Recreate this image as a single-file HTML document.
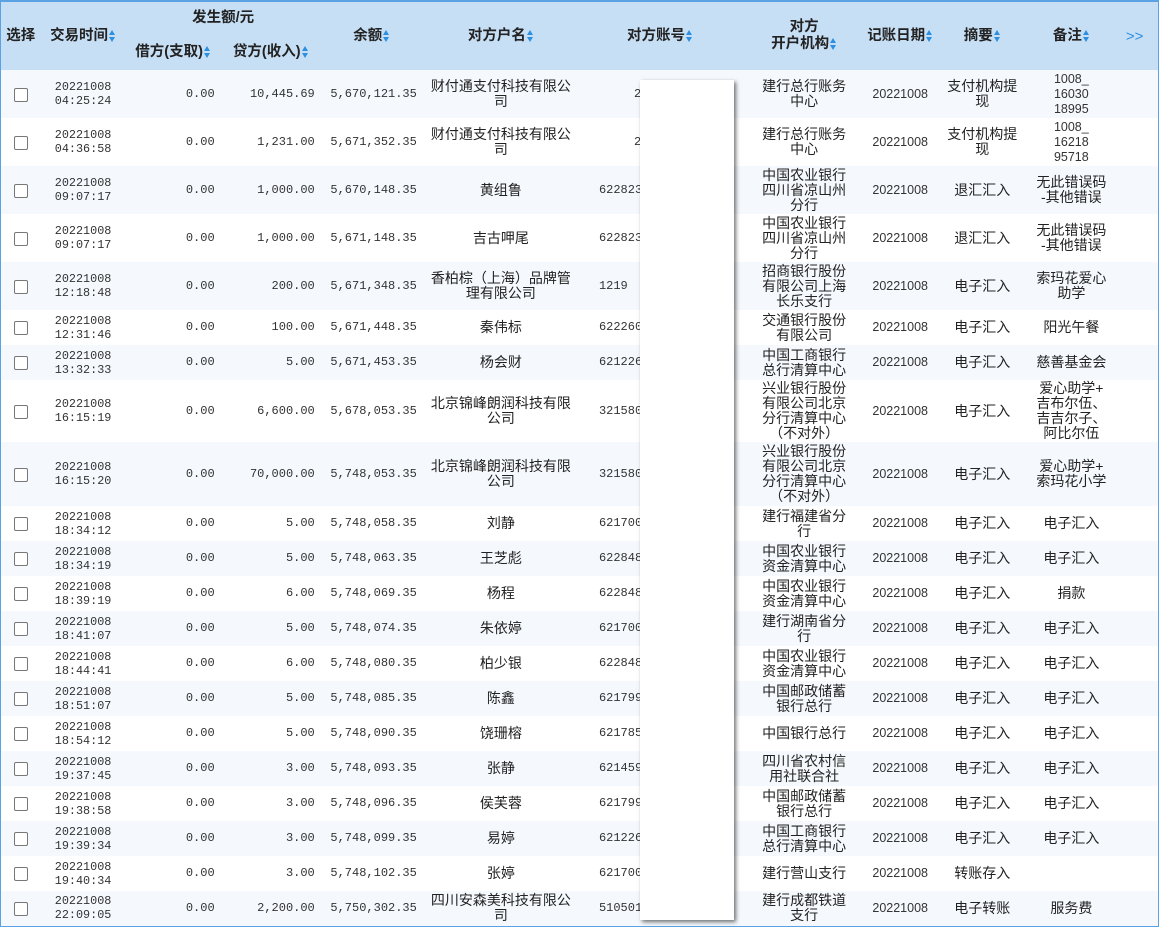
<!DOCTYPE html>
<html><head><meta charset="utf-8"><style>
body{margin:0;background:#fff;width:1168px;height:930px;overflow:hidden;position:relative;font-family:"Liberation Sans","Noto Sans CJK SC",sans-serif;color:#222}
table{position:absolute;left:0;top:0;border-collapse:collapse;table-layout:fixed;width:1159px;border:1px solid #5aa2e3;border-top:2px solid #5aa2e3}
th{background:#c7dff5;font-weight:bold;font-size:14.5px;color:#222;padding:0;text-align:center;line-height:17px;white-space:nowrap;overflow:visible}
td{padding:0;font-size:14px;line-height:15px;text-align:center;overflow:hidden;white-space:nowrap}
td.w{white-space:normal;padding:0 5px}
tbody tr:nth-child(odd){background:#f5f9fd}
.n{font-family:"Liberation Mono",monospace;font-size:12px;text-align:right;padding-right:6px;color:#333}
.t{font-family:"Liberation Mono",monospace;font-size:11.8px;line-height:14px;color:#333}
.d{font-size:12.5px;color:#333}
.a{font-family:"Liberation Mono",monospace;font-size:12px;text-align:left;padding-left:20px;color:#333}
.cb{display:inline-block;width:12px;height:12px;border:1px solid #777;border-radius:2px;background:#fff;vertical-align:middle}
.s{display:inline-block;width:7px;height:14px;vertical-align:middle;position:relative;margin-left:1px}
.s:before{content:"";position:absolute;left:0;top:1px;border-left:3.5px solid transparent;border-right:3.5px solid transparent;border-bottom:5px solid #2d8fe0}
.s:after{content:"";position:absolute;left:0;top:8px;border-left:3.5px solid transparent;border-right:3.5px solid transparent;border-top:5px solid #2d8fe0}
.box{position:absolute;left:640px;top:80px;width:94px;height:840px;background:#fff;box-shadow:2px 2px 4px rgba(0,0,0,.55)}
</style></head><body>
<table>
<colgroup><col style="width:40px"><col style="width:85px"><col style="width:95px"><col style="width:100px"><col style="width:102px"><col style="width:156px"><col style="width:162px"><col style="width:126px"><col style="width:66px"><col style="width:98px"><col style="width:80px"><col style="width:47px"></colgroup>
<thead>
<tr style="height:34px"><th rowspan="2">选择</th><th rowspan="2">交易时间<span class="s"></span></th><th colspan="2">发生额/元</th><th rowspan="2">余额<span class="s"></span></th><th rowspan="2">对方户名<span class="s"></span></th><th rowspan="2">对方账号<span class="s"></span></th><th rowspan="2" style="white-space:normal">对方<br>开户机构<span class="s"></span></th><th rowspan="2">记账日期<span class="s"></span></th><th rowspan="2">摘要<span class="s"></span></th><th rowspan="2">备注<span class="s"></span></th><th rowspan="2" style="color:#2d8fe0;font-weight:normal;font-size:15px">&gt;&gt;</th></tr>
<tr style="height:35px"><th>借方(支取)<span class="s"></span></th><th>贷方(收入)<span class="s"></span></th></tr>
</thead>
<tbody>
<tr style="height:48px"><td><span class="cb"></span></td><td class="t">20221008<br>04:25:24</td><td class="n">0.00</td><td class="n">10,445.69</td><td class="n">5,670,121.35</td><td class="w">财付通支付科技有限公司</td><td class="a" style="padding-left:55px">2</td><td class="w">建行总行账务<br>中心</td><td class="d">20221008</td><td class="w">支付机构提<br>现</td><td class="d" style="line-height:15px">1008_<br>16030<br>18995</td><td></td></tr>
<tr style="height:48px"><td><span class="cb"></span></td><td class="t">20221008<br>04:36:58</td><td class="n">0.00</td><td class="n">1,231.00</td><td class="n">5,671,352.35</td><td class="w">财付通支付科技有限公司</td><td class="a" style="padding-left:55px">2</td><td class="w">建行总行账务<br>中心</td><td class="d">20221008</td><td class="w">支付机构提<br>现</td><td class="d">1008_<br>16218<br>95718</td><td></td></tr>
<tr style="height:48px"><td><span class="cb"></span></td><td class="t">20221008<br>09:07:17</td><td class="n">0.00</td><td class="n">1,000.00</td><td class="n">5,670,148.35</td><td>黄组鲁</td><td class="a">622823</td><td>中国农业银行<br>四川省凉山州<br>分行</td><td class="d">20221008</td><td>退汇汇入</td><td>无此错误码<br>-其他错误</td><td></td></tr>
<tr style="height:48px"><td><span class="cb"></span></td><td class="t">20221008<br>09:07:17</td><td class="n">0.00</td><td class="n">1,000.00</td><td class="n">5,671,148.35</td><td>吉古呷尾</td><td class="a">622823</td><td>中国农业银行<br>四川省凉山州<br>分行</td><td class="d">20221008</td><td>退汇汇入</td><td>无此错误码<br>-其他错误</td><td></td></tr>
<tr style="height:48px"><td><span class="cb"></span></td><td class="t">20221008<br>12:18:48</td><td class="n">0.00</td><td class="n">200.00</td><td class="n">5,671,348.35</td><td>香柏棕（上海）品牌管<br>理有限公司</td><td class="a">1219</td><td>招商银行股份<br>有限公司上海<br>长乐支行</td><td class="d">20221008</td><td>电子汇入</td><td>索玛花爱心<br>助学</td><td></td></tr>
<tr style="height:35px"><td><span class="cb"></span></td><td class="t">20221008<br>12:31:46</td><td class="n">0.00</td><td class="n">100.00</td><td class="n">5,671,448.35</td><td>秦伟标</td><td class="a">622260</td><td>交通银行股份<br>有限公司</td><td class="d">20221008</td><td>电子汇入</td><td>阳光午餐</td><td></td></tr>
<tr style="height:35px"><td><span class="cb"></span></td><td class="t">20221008<br>13:32:33</td><td class="n">0.00</td><td class="n">5.00</td><td class="n">5,671,453.35</td><td>杨会财</td><td class="a">621226</td><td>中国工商银行<br>总行清算中心</td><td class="d">20221008</td><td>电子汇入</td><td>慈善基金会</td><td></td></tr>
<tr style="height:62px"><td><span class="cb"></span></td><td class="t">20221008<br>16:15:19</td><td class="n">0.00</td><td class="n">6,600.00</td><td class="n">5,678,053.35</td><td>北京锦峰朗润科技有限<br>公司</td><td class="a">321580</td><td>兴业银行股份<br>有限公司北京<br>分行清算中心<br>（不对外）</td><td class="d">20221008</td><td>电子汇入</td><td>爱心助学+<br>吉布尔伍、<br>吉吉尔子、<br>阿比尔伍</td><td></td></tr>
<tr style="height:64px"><td><span class="cb"></span></td><td class="t">20221008<br>16:15:20</td><td class="n">0.00</td><td class="n">70,000.00</td><td class="n">5,748,053.35</td><td>北京锦峰朗润科技有限<br>公司</td><td class="a">321580</td><td>兴业银行股份<br>有限公司北京<br>分行清算中心<br>（不对外）</td><td class="d">20221008</td><td>电子汇入</td><td>爱心助学+<br>索玛花小学</td><td></td></tr>
<tr style="height:35px"><td><span class="cb"></span></td><td class="t">20221008<br>18:34:12</td><td class="n">0.00</td><td class="n">5.00</td><td class="n">5,748,058.35</td><td>刘静</td><td class="a">621700</td><td>建行福建省分<br>行</td><td class="d">20221008</td><td>电子汇入</td><td>电子汇入</td><td></td></tr>
<tr style="height:35px"><td><span class="cb"></span></td><td class="t">20221008<br>18:34:19</td><td class="n">0.00</td><td class="n">5.00</td><td class="n">5,748,063.35</td><td>王芝彪</td><td class="a">622848</td><td>中国农业银行<br>资金清算中心</td><td class="d">20221008</td><td>电子汇入</td><td>电子汇入</td><td></td></tr>
<tr style="height:35px"><td><span class="cb"></span></td><td class="t">20221008<br>18:39:19</td><td class="n">0.00</td><td class="n">6.00</td><td class="n">5,748,069.35</td><td>杨程</td><td class="a">622848</td><td>中国农业银行<br>资金清算中心</td><td class="d">20221008</td><td>电子汇入</td><td>捐款</td><td></td></tr>
<tr style="height:35px"><td><span class="cb"></span></td><td class="t">20221008<br>18:41:07</td><td class="n">0.00</td><td class="n">5.00</td><td class="n">5,748,074.35</td><td>朱依婷</td><td class="a">621700</td><td>建行湖南省分<br>行</td><td class="d">20221008</td><td>电子汇入</td><td>电子汇入</td><td></td></tr>
<tr style="height:35px"><td><span class="cb"></span></td><td class="t">20221008<br>18:44:41</td><td class="n">0.00</td><td class="n">6.00</td><td class="n">5,748,080.35</td><td>柏少银</td><td class="a">622848</td><td>中国农业银行<br>资金清算中心</td><td class="d">20221008</td><td>电子汇入</td><td>电子汇入</td><td></td></tr>
<tr style="height:35px"><td><span class="cb"></span></td><td class="t">20221008<br>18:51:07</td><td class="n">0.00</td><td class="n">5.00</td><td class="n">5,748,085.35</td><td>陈鑫</td><td class="a">621799</td><td>中国邮政储蓄<br>银行总行</td><td class="d">20221008</td><td>电子汇入</td><td>电子汇入</td><td></td></tr>
<tr style="height:35px"><td><span class="cb"></span></td><td class="t">20221008<br>18:54:12</td><td class="n">0.00</td><td class="n">5.00</td><td class="n">5,748,090.35</td><td>饶珊榕</td><td class="a">621785</td><td>中国银行总行</td><td class="d">20221008</td><td>电子汇入</td><td>电子汇入</td><td></td></tr>
<tr style="height:35px"><td><span class="cb"></span></td><td class="t">20221008<br>19:37:45</td><td class="n">0.00</td><td class="n">3.00</td><td class="n">5,748,093.35</td><td>张静</td><td class="a">621459</td><td>四川省农村信<br>用社联合社</td><td class="d">20221008</td><td>电子汇入</td><td>电子汇入</td><td></td></tr>
<tr style="height:35px"><td><span class="cb"></span></td><td class="t">20221008<br>19:38:58</td><td class="n">0.00</td><td class="n">3.00</td><td class="n">5,748,096.35</td><td>侯芙蓉</td><td class="a">621799</td><td>中国邮政储蓄<br>银行总行</td><td class="d">20221008</td><td>电子汇入</td><td>电子汇入</td><td></td></tr>
<tr style="height:35px"><td><span class="cb"></span></td><td class="t">20221008<br>19:39:34</td><td class="n">0.00</td><td class="n">3.00</td><td class="n">5,748,099.35</td><td>易婷</td><td class="a">621226</td><td>中国工商银行<br>总行清算中心</td><td class="d">20221008</td><td>电子汇入</td><td>电子汇入</td><td></td></tr>
<tr style="height:35px"><td><span class="cb"></span></td><td class="t">20221008<br>19:40:34</td><td class="n">0.00</td><td class="n">3.00</td><td class="n">5,748,102.35</td><td>张婷</td><td class="a">621700</td><td>建行营山支行</td><td class="d">20221008</td><td>转账存入</td><td></td><td></td></tr>
<tr style="height:35px"><td><span class="cb"></span></td><td class="t">20221008<br>22:09:05</td><td class="n">0.00</td><td class="n">2,200.00</td><td class="n">5,750,302.35</td><td>四川安森美科技有限公<br>司</td><td class="a">5105018</td><td>建行成都铁道<br>支行</td><td class="d">20221008</td><td>电子转账</td><td>服务费</td><td></td></tr>
</tbody></table>
<div class="box"></div>
</body></html>
